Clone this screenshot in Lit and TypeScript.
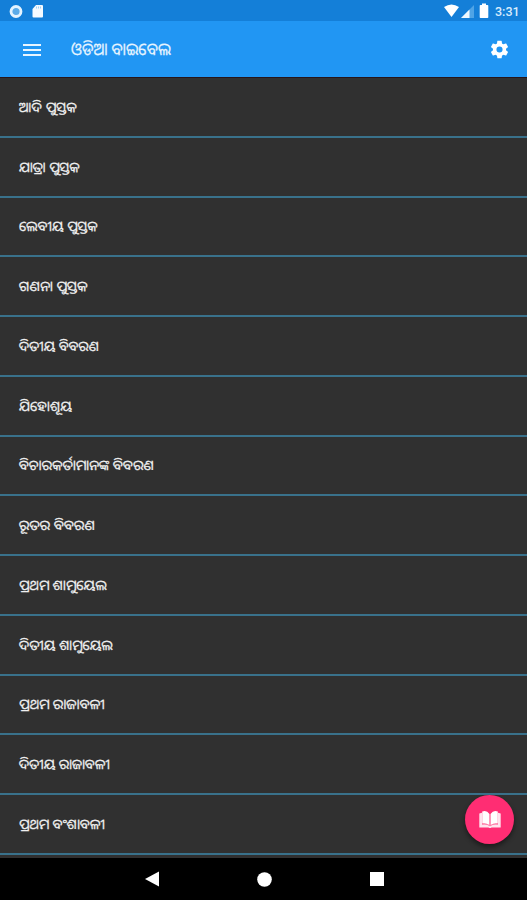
import { LitElement, html, css, svg } from "lit";
import { customElement } from "lit/decorators.js";

interface Book {
  name: string;
  width: number;
}

const BOOKS: Book[] = [
  { name: "ଆଦି ପୁସ୍ତକ", width: 58 },
  { name: "ଯାତ୍ରା ପୁସ୍ତକ", width: 61 },
  { name: "ଲେବୀୟ ପୁସ୍ତକ", width: 79 },
  { name: "ଗଣନା ପୁସ୍ତକ", width: 69 },
  { name: "ଦିତୀୟ ବିବରଣ", width: 80 },
  { name: "ଯିହୋଶୂୟ", width: 53 },
  { name: "ବିଚାରକର୍ତାମାନଙ୍କ ବିବରଣ", width: 135 },
  { name: "ରୂତର ବିବରଣ", width: 76 },
  { name: "ପ୍ରଥମ ଶାମୁୟେଲ", width: 88 },
  { name: "ଦିତୀୟ ଶାମୁୟେଲ", width: 94 },
  { name: "ପ୍ରଥମ ରାଜାବଳୀ", width: 86 },
  { name: "ଦିତୀୟ ରାଜାବଳୀ", width: 91 },
  { name: "ପ୍ରଥମ ବଂଶାବଳୀ", width: 86 },
];

// One line of Odia text, fitted to a fixed advance width.
const label = (text: string, width: number) => html`
  <svg class="label" width=${width} height="30" aria-label=${text}>
    ${svg`<text x="0" y="20" textLength=${width} lengthAdjust="spacingAndGlyphs">${text}</text>`}
  </svg>
`;

@customElement("app-root")
export class AppRoot extends LitElement {
  static styles = css`
    :host {
      display: flex;
      flex-direction: column;
      width: 100%;
      height: 900px;
      overflow: hidden;
      position: relative;
      background: #303030;
      color: #fff;
      font-family: "Noto Sans Oriya", "Noto Sans", Roboto, sans-serif;
    }
    svg { display: block; flex: none; }
    .status {
      flex: none;
      height: 21px;
      display: flex;
      align-items: center;
      background: #147fd8;
      padding: 0 7px 0 9px;
      box-sizing: border-box;
    }
    .sd { margin-left: 8px; }
    .grow { flex: 1; }
    .signal { margin-left: 2px; }
    .battery { margin-left: 5px; }
    .time {
      font: 500 12.5px/21px Roboto, sans-serif;
      width: 25px;
      margin-left: 6px;
      padding-top: 2px;
      color: #d9ecfd;
      white-space: nowrap;
    }
    .bar {
      flex: none;
      height: 57px;
      display: flex;
      align-items: center;
      box-sizing: border-box;
      padding: 1px 17px 0 23px;
      background: #2196f3;
      border-bottom: 1px solid #26151a;
    }
    .title { margin-left: 30px; flex: 1; }
    .label {
      overflow: visible;
      fill: #f0f0f0;
      stroke: #f0f0f0;
      stroke-width: 0.25px;
      font-size: 14px;
    }
    .title .label { font-size: 17px; fill: #e6f4ff; stroke: #e6f4ff; }
    .list {
      flex: 1;
      min-height: 0;
      overflow: hidden;
      margin: 0;
      padding: 0;
      list-style: none;
    }
    .row {
      height: 59.75px;
      box-sizing: border-box;
      display: flex;
      align-items: center;
      padding-left: 19px;
      border-bottom: 2px solid #39718b;
    }
    .nav {
      flex: none;
      height: 42px;
      background: #000;
      display: flex;
      align-items: center;
      justify-content: center;
      gap: 98px;
      padding-left: 1px;
    }
    .fab {
      position: absolute;
      right: 13px;
      bottom: 56px;
      width: 49px;
      height: 49px;
      padding: 0;
      border: 0;
      border-radius: 50%;
      background: #ff2d73;
      box-shadow: 0 3px 5px rgba(0, 0, 0, 0.45);
      display: flex;
      align-items: center;
      justify-content: center;
    }
  `;

  render() {
    return html`
      <div class="status">
        <svg width="14" height="14" viewBox="0 0 14 14">
          <circle cx="7" cy="7.500" r="5" fill="#5babe9" stroke="#e4f3ff" stroke-width="2.8" />
        </svg>
        <svg class="sd" width="13" height="14" viewBox="0 0 13 14">
          <path d="M5 1h6q1 0 1 1v10.500q0 1-1 1H2.500q-1 0-1-1V5z" fill="#f4faff" />
          <path d="M5.500 2.500v2M7.500 2.500v2M9.500 2.500v2" stroke="#8ec6f2" stroke-width=".8" />
        </svg>
        <div class="grow"></div>
        <svg width="15" height="13" viewBox="0 0 15 13">
          <path d="M0 3Q7.500-2 15 3L7.500 13z" fill="#fff" />
        </svg>
        <svg class="signal" width="13" height="14" viewBox="0 0 13 14">
          <path d="M13 1v13H0z" fill="#4fa4e6" />
          <path d="M8.500 5.500V14H0z" fill="#eef8ff" />
        </svg>
        <svg class="battery" width="10" height="16" viewBox="0 0 10 16">
          <path d="M3 .5h4V2h1.500q.8 0 .8.800v11.500q0 .7-.8.700h-7q-.8 0-.8-.7V2.800q0-.8.8-.8H3z" fill="#fff" />
        </svg>
        <div class="time">3:31</div>
      </div>
      <div class="bar">
        <svg width="18" height="12" viewBox="0 0 18 12">
          <path d="M0 1h18M0 6h18M0 11h18" stroke="#e8f5ff" stroke-width="1.8" />
        </svg>
        <div class="title">${label("ଓଡିଆ ବାଇବେଲ", 100)}</div>
        <svg width="21" height="21" viewBox="0 0 24 24">
          <path fill="#fff" d="M19.430 12.980c.04-.32.070-.64.070-.98s-.03-.66-.07-.98l2.110-1.650c.19-.15.240-.42.120-.64l-2-3.460c-.12-.22-.39-.3-.61-.22l-2.490 1c-.52-.4-1.080-.73-1.690-.98l-.38-2.650A.488.488 0 0 0 14 2h-4c-.25 0-.46.180-.49.420l-.38 2.650c-.61.250-1.170.590-1.690.980l-2.490-1c-.23-.09-.49 0-.61.220l-2 3.460c-.13.220-.07.490.120.640l2.110 1.650c-.04.320-.07.650-.07.980s.03.660.070.980l-2.110 1.650c-.19.150-.24.420-.12.640l2 3.460c.12.220.390.300.610.220l2.490-1c.52.400 1.080.730 1.690.980l.38 2.650c.03.240.240.420.490.420h4c.25 0 .46-.18.490-.42l.38-2.650c.61-.25 1.170-.59 1.690-.98l2.490 1c.23.090.490 0 .61-.22l2-3.460c.12-.22.070-.49-.12-.64zM12 15.500a3.500 3.500 0 1 1 0-7 3.500 3.500 0 0 1 0 7z" />
        </svg>
      </div>
      <ul class="list">
        ${BOOKS.map((b) => html`<li class="row">${label(b.name, b.width)}</li>`)}
      </ul>
      <div class="nav">
        <svg width="14" height="16" viewBox="0 0 14 16"><path d="M0 8L14 .5v15z" fill="#fff" /></svg>
        <svg width="15" height="15" viewBox="0 0 15 15"><circle cx="7.500" cy="7.500" r="7.300" fill="#fff" /></svg>
        <svg width="14" height="14" viewBox="0 0 14 14"><path d="M0 0h14v14H0z" fill="#fff" /></svg>
      </div>
      <button class="fab" aria-label="Bible">
        <svg width="22" height="19" viewBox="0 0 22 19">
          <path d="M.3 3.500L3 2.800v11.700q5-.8 8 1.500 3-2.300 8-1.500V2.800l2.700.7v14H12.500q-1.500 1-3 0H.3z" fill="#ffe3ed" />
          <path d="M3.200 1.600Q7.500-.3 10.500 4v11.200Q7.500 12.800 3.200 13.600zM18.800 1.600Q14.500-.3 11.500 4v11.200q3-2.400 7.300-1.600z" fill="#fff" />
          <path d="M3 14.200q5-.9 8 1.700 3-2.600 8-1.700" fill="none" stroke="#ff8fb5" stroke-width=".8" />
        </svg>
      </button>
    `;
  }
}
